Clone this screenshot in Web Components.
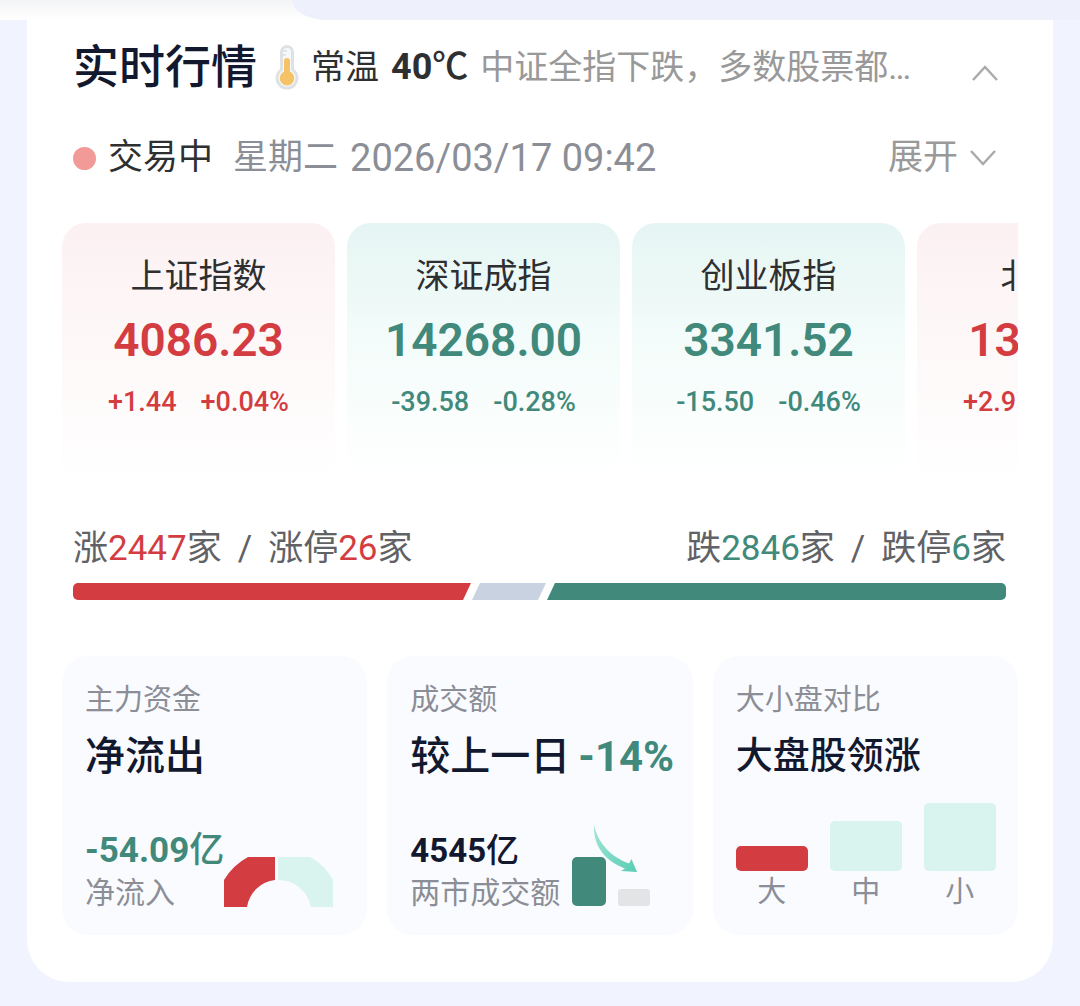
<!DOCTYPE html>
<html lang="zh-CN">
<head>
<meta charset="UTF-8">
<meta name="viewport" content="width=device-width, initial-scale=1.0">
<title>实时行情</title>
<style>
  :root {
    --up: #d33d41;
    --down: #40897b;
    --down-soft: #d9f3ee;
    --ink: #12192f;
    --text: #2e2f31;
    --muted: #8b8e96;
    --page: #f1f4fe;
  }

  body {
    margin: 0;
    background-color: var(--page);
    color: var(--text);
    font-family: Roboto, "Noto Sans CJK SC", sans-serif;
  }
</style>
</head>
<body>

<tab-edge></tab-edge>
<market-card>
  <market-header slot="header" heading="实时行情" mood="常温" degree="40" summary="中证全指下跌，多数股票都…"></market-header>
  <market-status slot="header" state="交易中" weekday="星期二" time="2026/03/17 09:42"></market-status>

  <index-list>
    <index-item name="上证指数" value="4086.23" change="+1.44" percent="+0.04%" trend="up"></index-item>
    <index-item name="深证成指" value="14268.00" change="-39.58" percent="-0.28%" trend="down"></index-item>
    <index-item name="创业板指" value="3341.52" change="-15.50" percent="-0.46%" trend="down"></index-item>
    <index-item name="北证50" value="1394.27" change="+2.95" percent="+0.21%" trend="up"></index-item>
  </index-list>

  <rise-fall rise="2447" limit-up="26" fall="2846" limit-down="6"></rise-fall>

  <panel-grid>
    <info-panel label="主力资金">
      <span slot="title">净流出</span>
      <flow-gauge amount="-54.09" caption="净流入"></flow-gauge>
    </info-panel>
    <info-panel label="成交额" extra="-14%">
      <span slot="title">较上一日</span>
      <turnover-chart amount="4545" caption="两市成交额"></turnover-chart>
    </info-panel>
    <info-panel label="大小盘对比" compact>
      <span slot="title">大盘股领涨</span>
      <cap-bars></cap-bars>
    </info-panel>
  </panel-grid>
</market-card>

<script>
// Base class: opens the shadow root and fills it with render()
class BaseElement extends HTMLElement {
  constructor() {
    super();
    this.attachShadow({ mode: 'open' });
  }

  connectedCallback() {
    this.shadowRoot.innerHTML = this.render();
  }

  attr(name) {
    return this.getAttribute(name) || '';
  }
}

// Bottom edge of the tab strip above the card
class TabEdge extends BaseElement {
  render() {
    return `
      <style>
      :host {
        display: block;
        padding-left: 27%;
        background: linear-gradient(#f3f4f6, #fff);
      }

      div {
        height: 20px;
        background-color: #eef1fb;
        border-bottom-left-radius: 36px 20px;
      }
      </style>
      <div></div>
    `;
  }
}

class MarketCard extends BaseElement {
  render() {
    return `
      <style>
      :host {
        display: block;
        margin: 0 27px 24px;
        padding: 0 35px 47px;
        background-color: #fff;
        border-radius: 0 0 42px 42px;
      }

      header {
        padding: 0 12px 0 11px;
      }
      </style>
      <header><slot name="header"></slot></header>
      <slot></slot>
    `;
  }
}

class MarketHeader extends BaseElement {
  render() {
    return `
      <style>
      :host {
        display: flex;
        align-items: center;
        height: 94px;
        font-size: 34px;
        line-height: 48px;
        white-space: nowrap;
      }

      h1 {
        margin: 0 18px 0 0;
        color: var(--ink);
        font-size: 46px;
        font-weight: 500;
      }

      svg {
        flex: none;
      }

      .mood {
        margin: 0 12px;
      }

      .degree {
        font-size: 36px;
        font-weight: 500;
      }

      p {
        flex: 1;
        min-width: 0;
        margin: 0 0 0 12px;
        overflow: hidden;
        color: #999;
      }

      button {
        display: flex;
        padding: 12px 8px 0;
        border: 0;
        background: none;
      }
      </style>
      <h1>${this.attr('heading')}</h1>
      <svg width="24" height="46" viewBox="0 0 24 46" aria-hidden="true">
        <path d="M5 8a7 7 0 0 1 14 0v17a11.500 11.500 0 1 1-14 0z" fill="#dfe2e5"/>
        <path d="M8 8a4 4 0 0 1 8 0v18.500a8.500 8.500 0 1 1-8 0z" fill="#f6f8fa"/>
        <path d="M9 17a3 3 0 0 1 6 0v10.500a7.300 7.300 0 1 1-6 0z" fill="#f5c267"/>
        <path d="M8 7h4M8 11h3" stroke="#cdd2d6" stroke-width="1"/>
      </svg>
      <span class="mood">${this.attr('mood')}</span>
      <span class="degree"><b>${this.attr('degree')}</b>℃</span>
      <p>${this.attr('summary')}</p>
      <button type="button" aria-label="收起">
        <svg width="26" height="16" viewBox="0 0 26 16" fill="none" stroke="#aaa" stroke-width="2.500"><path d="M1 15 13 2l12 13"/></svg>
      </button>
    `;
  }
}

class MarketStatus extends BaseElement {
  render() {
    return `
      <style>
      :host {
        display: flex;
        align-items: center;
        height: 88px;
        font-size: 35px;
        line-height: 48px;
        white-space: nowrap;
      }

      i {
        width: 23px;
        height: 23px;
        margin-right: 12px;
        border-radius: 50%;
        background-color: #f19a97;
      }

      .weekday {
        margin: 0 12px 0 20px;
        color: var(--muted);
      }

      time {
        color: var(--muted);
        font-size: 38px;
      }

      button {
        display: flex;
        align-items: center;
        gap: 12px;
        margin-left: auto;
        padding: 0 10px;
        border: 0;
        background: none;
        color: #999;
        font: inherit;
      }
      </style>
      <i></i>
      <span>${this.attr('state')}</span>
      <span class="weekday">${this.attr('weekday')}</span>
      <time>${this.attr('time')}</time>
      <button type="button">展开
        <svg width="26" height="16" viewBox="0 0 26 16" fill="none" stroke="#aaa" stroke-width="2.500"><path d="M1 1l12 13L25 1"/></svg>
      </button>
    `;
  }
}

class IndexList extends BaseElement {
  render() {
    return `
      <style>
      :host {
        display: flex;
        gap: 12px;
        margin-top: 21px;
        overflow-x: auto;
        scrollbar-width: none;
      }
      </style>
      <slot></slot>
    `;
  }
}

class IndexItem extends BaseElement {
  render() {
    return `
      <style>
      :host {
        flex: 0 0 273px;
        box-sizing: border-box;
        padding: 29px 0 56px;
        border-radius: 24px 24px 0 0;
        text-align: center;
        white-space: nowrap;
      }

      :host([trend="up"]) {
        --trend: var(--up);
        background: linear-gradient(#fcf1f2, #fff);
      }

      :host([trend="down"]) {
        --trend: var(--down);
        background: linear-gradient(#e5f5f3, #f3fcfa 45%, #fff);
      }

      h2 {
        margin: 0;
        font-size: 34px;
        font-weight: 400;
        line-height: 48px;
      }

      .value {
        margin: 12px 0 14px;
        color: var(--trend);
        font-size: 46px;
        font-weight: 600;
        line-height: 56px;
      }

      .change {
        display: flex;
        justify-content: center;
        gap: 24px;
        color: var(--trend);
        font-size: 27px;
        font-weight: 500;
        line-height: 40px;
      }
      </style>
      <h2>${this.attr('name')}</h2>
      <div class="value">${this.attr('value')}</div>
      <div class="change">
        <span>${this.attr('change')}</span>
        <span>${this.attr('percent')}</span>
      </div>
    `;
  }
}

class RiseFall extends BaseElement {
  render() {
    return `
      <style>
      :host {
        display: block;
        margin-top: 47px;
        padding: 0 12px 0 11px;
        color: #616265;
        font-size: 35px;
        line-height: 48px;
        white-space: nowrap;
      }

      .counts,
      .counts div {
        display: flex;
      }

      .counts {
        justify-content: space-between;
      }

      .counts div {
        gap: 16px;
      }

      .up {
        color: var(--up);
      }

      .down {
        color: var(--down);
      }

      .bar {
        display: flex;
        gap: 1px;
        height: 17px;
        margin-top: 10px;
        border-radius: 5px;
        overflow: hidden;
      }

      .bar i:nth-child(1) {
        flex: 398;
        background-color: var(--up);
        clip-path: polygon(0 0, 100% 0, calc(100% - 8px) 100%, 0 100%);
      }

      .bar i:nth-child(2) {
        flex: 74;
        background-color: #c9d2e1;
        clip-path: polygon(8px 0, 100% 0, calc(100% - 8px) 100%, 0 100%);
      }

      .bar i:nth-child(3) {
        flex: 459;
        background-color: var(--down);
        clip-path: polygon(8px 0, 100% 0, 100% 100%, 0 100%);
      }
      </style>
      <div class="counts">
        <div>
          <span>涨<span class="up">${this.attr('rise')}</span>家</span>
          <span>/</span>
          <span>涨停<span class="up">${this.attr('limit-up')}</span>家</span>
        </div>
        <div>
          <span>跌<span class="down">${this.attr('fall')}</span>家</span>
          <span>/</span>
          <span>跌停<span class="down">${this.attr('limit-down')}</span>家</span>
        </div>
      </div>
      <div class="bar"><i></i><i></i><i></i></div>
    `;
  }
}

class PanelGrid extends BaseElement {
  render() {
    return `
      <style>
      :host {
        display: grid;
        grid-template-columns: repeat(3, 1fr);
        gap: 20px;
        margin-top: 56px;
      }
      </style>
      <slot></slot>
    `;
  }
}

class InfoPanel extends BaseElement {
  render() {
    return `
      <style>
      :host {
        display: flex;
        flex-direction: column;
        box-sizing: border-box;
        min-width: 0;
        min-height: 279px;
        padding: 24px 0 22px 23px;
        border-radius: 26px;
        background-color: #fafbff;
        white-space: nowrap;
      }

      h3 {
        margin: 0;
        color: var(--muted);
        font-size: 29px;
        font-weight: 400;
        line-height: 40px;
      }

      .title {
        display: flex;
        gap: 8px;
        margin-top: 8px;
        color: var(--ink);
        font-size: 40px;
        font-weight: 500;
        line-height: 58px;
      }

      :host([compact]) .title {
        font-size: 37px;
      }

      b {
        color: var(--down);
        font-size: 42px;
      }

      .body {
        margin-top: auto;
      }
      </style>
      <h3>${this.attr('label')}</h3>
      <div class="title"><slot name="title"></slot><b>${this.attr('extra')}</b></div>
      <div class="body"><slot></slot></div>
    `;
  }
}

// Shared by the two panels that show an amount beside a small chart
const amountStyle = `
  :host {
    display: flex;
    align-items: flex-end;
  }

  .amount {
    font-weight: 500;
    line-height: 44px;
  }

  .caption {
    color: var(--muted);
    font-size: 30px;
    line-height: 40px;
  }

  svg {
    flex: none;
    margin-bottom: 6px;
  }
`;

class FlowGauge extends BaseElement {
  render() {
    return `
      <style>
      ${amountStyle}
      .amount {
        color: var(--down);
        font-size: 35px;
      }
      </style>
      <div>
        <div class="amount"><b>${this.attr('amount')}</b>亿</div>
        <div class="caption">${this.attr('caption')}</div>
      </div>
      <svg width="109" height="50" viewBox="0 0 109 50" aria-hidden="true">
        <path d="M0 50V23Q9 8 24 0H51V23A32 32 0 0 0 23 50z" fill="#d33d41"/>
        <path d="M54 0H86Q101 8 109 23V50H87A33 33 0 0 0 54 23z" fill="#d9f3ee"/>
      </svg>
    `;
  }
}

class TurnoverChart extends BaseElement {
  render() {
    return `
      <style>
      ${amountStyle}
      :host {
        gap: 12px;
      }

      .amount {
        color: var(--ink);
        font-size: 33px;
      }
      </style>
      <div>
        <div class="amount"><b>${this.attr('amount')}</b>亿</div>
        <div class="caption">${this.attr('caption')}</div>
      </div>
      <svg width="78" height="82" viewBox="0 0 78 82" aria-hidden="true">
        <defs>
          <linearGradient id="fade" x1="0" y1="0" x2="1" y2="1">
            <stop offset="0" stop-color="#a5e5d8"/>
            <stop offset="1" stop-color="#58cdb3"/>
          </linearGradient>
        </defs>
        <rect x="0" y="32" width="34" height="49" rx="5" fill="#40897b"/>
        <rect x="46" y="64" width="32" height="17" rx="3" fill="#e3e4e6"/>
        <path d="M22 0C26 17 37 31 57 38.500L59.500 34 65 47 49 46 53 43.500C33 36 21 21 22 0z" fill="url(#fade)"/>
      </svg>
    `;
  }
}

class CapBars extends BaseElement {
  render() {
    return `
      <style>
      :host {
        display: grid;
        grid-template-columns: repeat(3, 72px);
        gap: 22px;
        align-items: end;
        color: var(--muted);
        font-size: 29px;
        line-height: 42px;
        text-align: center;
      }

      i {
        display: block;
        border-radius: 5px;
        background-color: var(--down-soft);
      }

      .large {
        height: 25px;
        background-color: var(--up);
      }

      .middle {
        height: 50px;
      }

      .small {
        height: 68px;
      }
      </style>
      <div><i class="large"></i>大</div>
      <div><i class="middle"></i>中</div>
      <div><i class="small"></i>小</div>
    `;
  }
}

customElements.define('tab-edge', TabEdge);
customElements.define('market-card', MarketCard);
customElements.define('market-header', MarketHeader);
customElements.define('market-status', MarketStatus);
customElements.define('index-list', IndexList);
customElements.define('index-item', IndexItem);
customElements.define('rise-fall', RiseFall);
customElements.define('panel-grid', PanelGrid);
customElements.define('info-panel', InfoPanel);
customElements.define('flow-gauge', FlowGauge);
customElements.define('turnover-chart', TurnoverChart);
customElements.define('cap-bars', CapBars);
</script>
</body>
</html>
